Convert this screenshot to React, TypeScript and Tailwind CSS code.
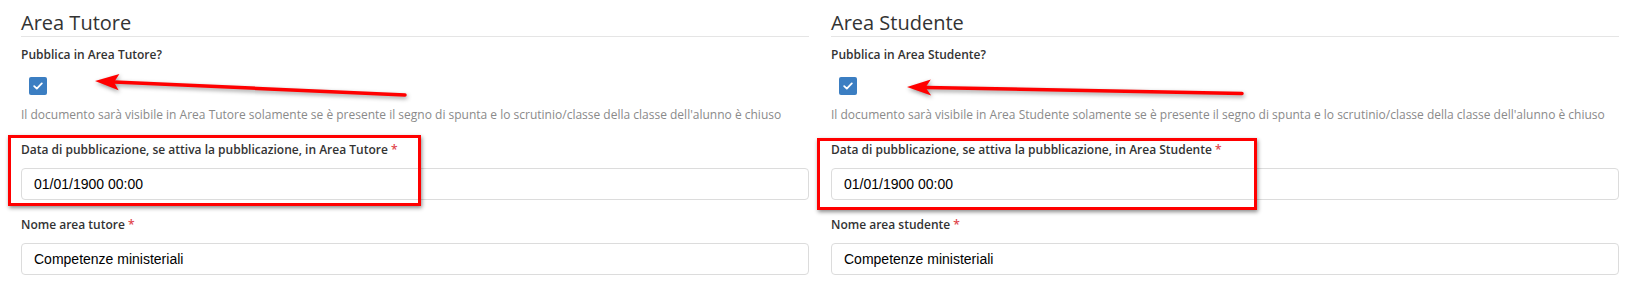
import React from "react";

function Column({ area, lower }: { area: string; lower: string }) {
  return (
    <div className="flex flex-col">
      <div className="pt-[9px] text-[20px] leading-[27px] text-[#333] border-b border-[#e5e5e5]">
        Area {area}
      </div>
      <div className="mt-[9px] text-[12px] leading-[18px] font-semibold text-[#333]">
        Pubblica in Area {area}?
      </div>
      <div className="mt-[13px] ml-[8px] w-[18px] h-[18px] rounded-[2px] bg-[#3b7ec2] flex items-center justify-center">
        <svg width="10" height="8" viewBox="0 0 10 8">
          <path d="M1.2 4.2 L3.8 6.6 L8.8 1.4" fill="none" stroke="white" strokeWidth="1.8" strokeLinecap="round" strokeLinejoin="round" />
        </svg>
      </div>
      <div className="mt-[11px] text-[12px] leading-[17px] text-[#8a8a8a] whitespace-nowrap">
        Il documento sarà visibile in Area {area} solamente se è presente il segno di spunta e lo scrutinio/classe della classe dell'alunno è chiuso
      </div>
      <div className="mt-[18px] text-[12px] leading-[18px] font-semibold text-[#333]">
        Data di pubblicazione, se attiva la pubblicazione, in Area {area} <span className="text-[#e0444b]">*</span>
      </div>
      <div className="mt-[9px] h-[32px] rounded-[4px] border border-[#dcdcdc] pl-[12px] flex items-center text-[14px] text-black [font-family:'Liberation_Sans',Arial,sans-serif]">
        01/01/1900 00:00
      </div>
      <div className="mt-[16px] text-[12px] leading-[18px] font-semibold text-[#333]">
        Nome area {lower} <span className="text-[#e0444b]">*</span>
      </div>
      <div className="mt-[9px] h-[32px] rounded-[4px] border border-[#dcdcdc] pl-[12px] flex items-center text-[14px] text-black [font-family:'Liberation_Sans',Arial,sans-serif]">
        Competenze ministeriali
      </div>
    </div>
  );
}

export default function App() {
  return (
    <div className="relative w-full h-[293px] bg-white overflow-hidden [font-family:'Open_Sans',sans-serif]">
      <div className="grid grid-cols-2 gap-x-[22px] pl-[21px] pr-[18px]">
        <Column area="Tutore" lower="tutore" />
        <Column area="Studente" lower="studente" />
      </div>

      {/* annotation boxes */}
      <div className="absolute left-[8px] top-[135px] w-[413px] h-[71px] border-[3px] border-[#ff0000] shadow-[1px_2px_4px_rgba(0,0,0,0.45)] pointer-events-none" />
      <div className="absolute left-[817px] top-[138px] w-[440px] h-[72px] border-[3px] border-[#ff0000] shadow-[1px_2px_4px_rgba(0,0,0,0.45)] pointer-events-none" />

      {/* annotation arrows */}
      <svg className="absolute inset-0 pointer-events-none" width="1637" height="293" style={{ filter: "drop-shadow(1px 2px 2px rgba(0,0,0,0.4))" }}>
        <line x1="114" y1="82" x2="405" y2="95" stroke="#ff0000" strokeWidth="3.5" strokeLinecap="round" />
        <polygon points="95,81 119.4,74 114,82.2 118.6,90.2" fill="#ff0000" />
        <line x1="926" y1="87.5" x2="1242" y2="93.5" stroke="#ff0000" strokeWidth="3.5" strokeLinecap="round" />
        <polygon points="907,87 930.8,79.5 925.5,87.6 931.2,95.5" fill="#ff0000" />
      </svg>
    </div>
  );
}
